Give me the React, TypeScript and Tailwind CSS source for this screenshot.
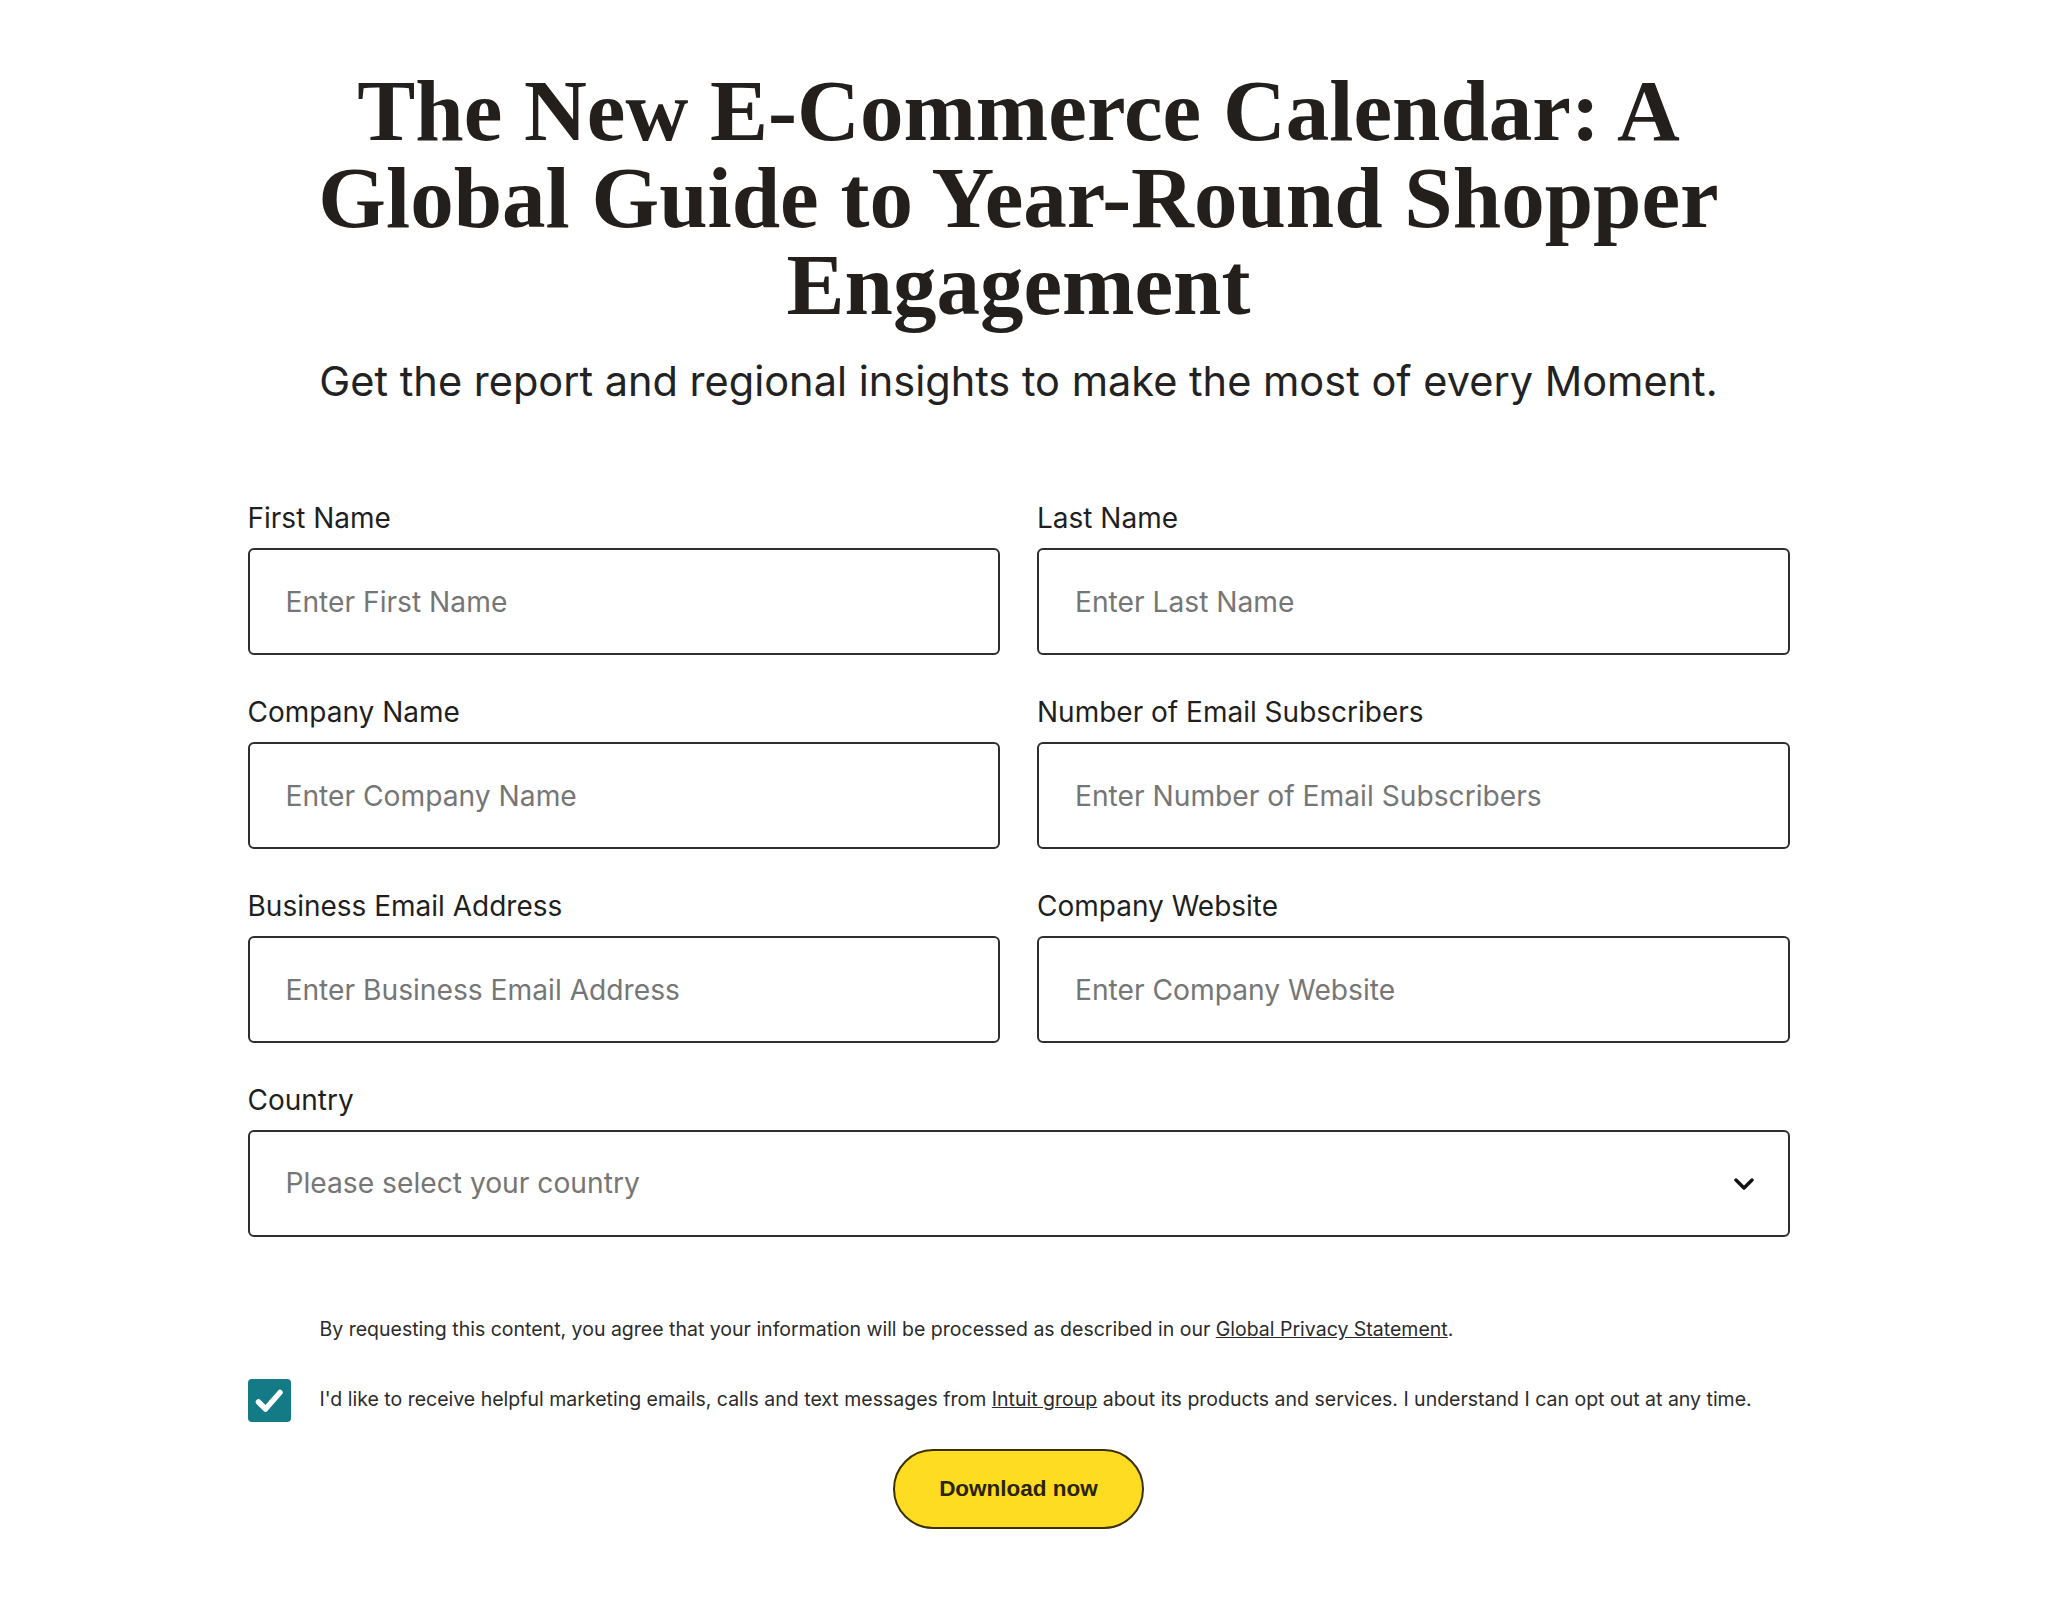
import React from "react";

const sans = "font-['Inter','Liberation_Sans',sans-serif]";

function Field({ label, placeholder }: { label: string; placeholder: string }) {
  return (
    <div className="flex flex-col">
      <label className={`${sans} text-[28px] leading-[34px] text-[#1f1f1f] mb-[13px]`}>{label}</label>
      <input
        type="text"
        placeholder={placeholder}
        className={`${sans} h-[107px] w-full rounded-[6px] border-2 border-[#2e2e2e] bg-white px-[36px] text-[28.2px] text-[#1f1f1f] placeholder:text-[#767676] outline-none`}
      />
    </div>
  );
}

export default function App() {
  return (
    <div className="min-h-[1604px] w-full bg-white pr-[11px]">
      <div className="mx-auto flex w-[1542px] flex-col items-center pt-[67px]">
        <h1 className="text-center font-['Liberation_Serif',serif] text-[87px] font-bold leading-[87px] text-[#221f1c]">
          The New E-Commerce Calendar: A
          <br />
          Global Guide to Year-Round Shopper
          <br />
          Engagement
        </h1>
        <p className={`${sans} mt-[28px] text-center text-[41.5px] leading-[50px] text-[#222222]`}>
          Get the report and regional insights to make the most of every Moment.
        </p>

        <form className="mt-[95px] flex w-full flex-col" onSubmit={(e) => e.preventDefault()}>
          <div className="grid grid-cols-2 gap-x-[37px] gap-y-[40px]">
            <Field label="First Name" placeholder="Enter First Name" />
            <Field label="Last Name" placeholder="Enter Last Name" />
            <Field label="Company Name" placeholder="Enter Company Name" />
            <Field label="Number of Email Subscribers" placeholder="Enter Number of Email Subscribers" />
            <Field label="Business Email Address" placeholder="Enter Business Email Address" />
            <Field label="Company Website" placeholder="Enter Company Website" />
            <div className="col-span-2 flex flex-col">
              <label className={`${sans} text-[28px] leading-[34px] text-[#1f1f1f] mb-[13px]`}>Country</label>
              <div className="relative">
                <select
                  defaultValue=""
                  className={`${sans} h-[107px] w-full appearance-none rounded-[6px] border-2 border-[#2e2e2e] bg-white px-[36px] text-[28.2px] text-[#767676] outline-none`}
                >
                  <option value="" disabled>
                    Please select your country
                  </option>
                </select>
                <svg
                  className="pointer-events-none absolute right-[36px] top-1/2 -translate-y-1/2"
                  width="20"
                  height="12"
                  viewBox="0 0 20 12"
                  fill="none"
                >
                  <path d="M2 2l8 8 8-8" stroke="#111" strokeWidth="3.4" strokeLinecap="round" strokeLinejoin="round" />
                </svg>
              </div>
            </div>
          </div>

          <p className={`${sans} mt-[78px] pl-[72px] text-[19.5px] leading-[28px] text-[#2b2b2b]`}>
            By requesting this content, you agree that your information will be processed as described in our{" "}
            <a href="#" className="underline">Global Privacy Statement</a>.
          </p>

          <div className="mt-[36px] flex items-center">
            <div className="flex h-[43px] w-[43px] shrink-0 items-center justify-center rounded-[4px] bg-[#147a86]">
              <svg width="30" height="26" viewBox="0 0 30 26" fill="none">
                <path d="M4.5 14l7 7L26 4.5" stroke="#ffffff" strokeWidth="5.5" strokeLinecap="round" strokeLinejoin="round" />
              </svg>
            </div>
            <p className={`${sans} ml-[29px] -mt-[3px] text-[19.5px] leading-[28px] text-[#2b2b2b]`}>
              I'd like to receive helpful marketing emails, calls and text messages from{" "}
              <a href="#" className="underline">Intuit group</a> about its products and services. I understand I can opt out at any time.
            </p>
          </div>

          <div className="mt-[27px] flex justify-center">
            <button
              type="submit"
              className="h-[80px] w-[251px] rounded-full border-2 border-[#3b3000] bg-[#fddc22] font-['Liberation_Sans',sans-serif] text-[22.5px] font-bold text-[#2a2300]"
            >
              Download now
            </button>
          </div>
        </form>
      </div>
    </div>
  );
}
